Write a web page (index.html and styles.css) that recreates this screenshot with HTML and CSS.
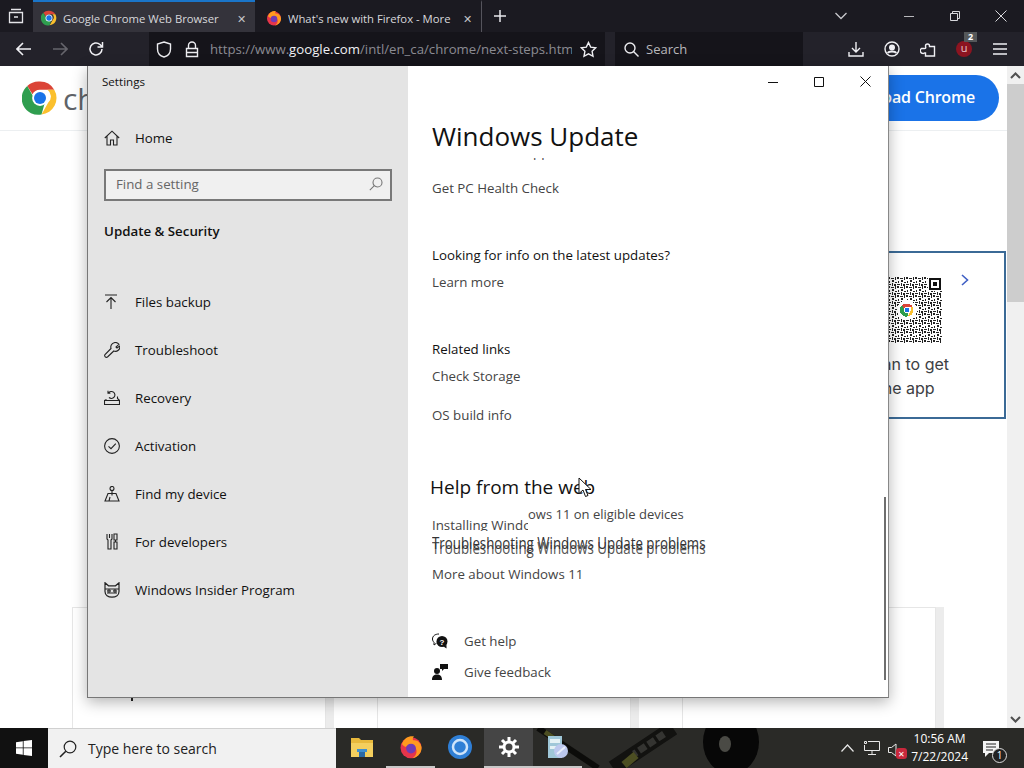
FILE: index.html
```html
<!DOCTYPE html>
<html lang="en">
<head>
  <meta charset="UTF-8" />
  <meta name="viewport" content="width=device-width, initial-scale=1.0"/>
  <title>Settings</title>
  <link rel="stylesheet" href="styles.css">
</head>
<body>

  <svg class="defs" width="0" height="0" aria-hidden="true">
    <symbol id="chrome" viewBox="0 0 48 48">
      <path d="M24 2a22 22 0 0 1 19 11H24a11 11 0 0 0-10 6L7 8a22 22 0 0 1 17-6z" fill="#db4437"/>
      <path d="M43 13a22 22 0 0 1-17 33l9-16a11 11 0 0 0-1-17z" fill="#fbc02d"/>
      <path d="M7 8l9.500 16.500a11 11 0 0 0 14 5.500L26 46A22 22 0 0 1 7 8z" fill="#2f9e4f"/>
      <circle cx="24" cy="24" r="10.500" fill="#fff"/>
      <circle cx="24" cy="24" r="8" fill="#1a73e8"/>
    </symbol>
    <symbol id="firefox" viewBox="0 0 32 32">
      <circle cx="16" cy="17" r="14" fill="#e6354b"/>
      <path d="M4 12C7 4 13 1 20 2c-2 2-2 4-1 5 5-1 10 3 11 9 1 7-5 14-12 15 6-4 7-11 3-15-3-3-9-3-12 0-2-1-4-2-5-4z" fill="#ff9a1f"/>
      <circle cx="16" cy="18" r="6.500" fill="#6f3bb5"/>
    </symbol>
  </svg>

  <div class="browser-tabs">
    <svg class="tab-list-icon" width="16" height="16" viewBox="0 0 16 16" fill="none" stroke="#e4e4e8" stroke-width="1.300">
      <path d="M3 1.500h10M1.500 4.500h13v10h-13zM6 9h4"/>
    </svg>
    <div class="tab tab-active">
      <svg class="tab-favicon" width="16" height="16"><use href="#chrome"/></svg>
      <span class="tab-title">Google Chrome Web Browser</span>
      <span class="tab-close">&#10005;</span>
    </div>
    <div class="tab">
      <svg class="tab-favicon" width="16" height="16"><use href="#firefox"/></svg>
      <span class="tab-title">What's new with Firefox - More</span>
      <span class="tab-close">&#10005;</span>
    </div>
    <svg class="tab-new" width="12" height="12" viewBox="0 0 12 12" stroke="#e8e8ec" stroke-width="1.500"><path d="M6 0v12M0 6h12"/></svg>
    <div class="window-controls">
      <svg width="12" height="8" viewBox="0 0 12 8" fill="none" stroke="#c8c8cc" stroke-width="1.300"><path d="M.5 1l5.500 5.500L11.500 1"/></svg>
      <svg class="win-min" width="10" height="10" viewBox="0 0 10 10" stroke="#b8b8bc"><path d="M0 5.500h10"/></svg>
      <svg class="win-restore" width="10" height="10" viewBox="0 0 10 10" fill="none" stroke="#d8d8dc"><path d="M.5 2.500h7v7h-7zM2.500 2.500v-2h7v7h-2"/></svg>
      <svg class="win-close" width="12" height="12" viewBox="0 0 12 12" stroke="#d8d8dc"><path d="M.5.500l11 11M11.500.500l-11 11"/></svg>
    </div>
  </div>

  <div class="browser-toolbar">
    <svg class="nav-back" width="16" height="14" viewBox="0 0 16 14" fill="none" stroke="#f0f0f4" stroke-width="1.600"><path d="M15 7H1.500M7 1L1 7l6 6"/></svg>
    <svg class="nav-forward" width="16" height="14" viewBox="0 0 16 14" fill="none" stroke="#66656c" stroke-width="1.600"><path d="M1 7h13.500M9 1l6 6-6 6"/></svg>
    <svg class="nav-reload" width="16" height="16" viewBox="0 0 16 16" fill="none" stroke="#f0f0f4" stroke-width="1.500"><path d="M14 8a6 6 0 1 1-2-4.500L14.500 6M14.500 1v5h-5"/></svg>
    <div class="url-bar">
      <svg width="16" height="17" viewBox="0 0 16 17" fill="none" stroke="#ececf0" stroke-width="1.400"><path d="M8 1l6.500 2v5c0 4-3 7-6.500 8C4.500 15 1.500 12 1.500 8V3z"/></svg>
      <svg class="url-lock" width="14" height="17" viewBox="0 0 14 17" fill="none" stroke="#ececf0" stroke-width="1.400"><path d="M1.500 7.500h11v8h-11zM3.500 7.500V4.500a3.500 3.500 0 0 1 7 0v3M1.500 11.500h11"/></svg>
      <span class="url-text">https://www.<b>google.com</b>/intl/en_ca/chrome/next-steps.htm</span>
      <svg class="url-star" width="17" height="17" viewBox="0 0 17 17" fill="none" stroke="#f0f0f4" stroke-width="1.400"><path d="M8.500 1.500l2.200 4.600 5 .7-3.600 3.500.9 5-4.500-2.400L4 15.300l.9-5L1.300 6.800l5-.7z"/></svg>
    </div>
    <div class="search-bar">
      <svg width="15" height="15" viewBox="0 0 15 15" fill="none" stroke="#ececf0" stroke-width="1.400"><circle cx="6" cy="6" r="5"/><path d="M9.500 9.500l5 5"/></svg>
      <span>Search</span>
    </div>
    <div class="toolbar-icons">
      <svg width="16" height="16" viewBox="0 0 16 16" fill="none" stroke="#f0f0f4" stroke-width="1.400"><path d="M8 1v9.500M4 7l4 4 4-4M1 11v4h14v-4"/></svg>
      <svg width="16" height="16" viewBox="0 0 16 16" fill="none" stroke="#f0f0f4" stroke-width="1.400"><circle cx="8" cy="8" r="7"/><circle cx="8" cy="6.500" r="2.300" fill="#f0f0f4"/><path d="M3.800 12c1-2 7.400-2 8.400 0" stroke-width="2"/></svg>
      <svg width="16" height="17" viewBox="0 0 16 17" fill="none" stroke="#f0f0f4" stroke-width="1.400"><path d="M1.500 8.500h3c2 0 1-1.500 1-2.500a2 2 0 0 1 4 0v.500h5v9.500h-9v-3h-1a2 2 0 0 1-3-4.500z" transform="translate(0 -1)"/></svg>
      <div class="ublock">
        <span class="ublock-mark">u</span>
        <span class="ublock-badge">2</span>
      </div>
      <svg width="16" height="12" viewBox="0 0 16 12" stroke="#f0f0f4" stroke-width="1.500"><path d="M1 1h14M1 6h14M1 11h14"/></svg>
    </div>
  </div>

  <div class="desktop">

    <div class="web-page">
      <div class="web-content">
        <header class="web-header">
          <svg width="36" height="36"><use href="#chrome"/></svg>
          <span class="web-brand">chrome</span>
          <button class="web-download">Download Chrome</button>
        </header>

        <div class="qr-card">
          <div class="qr-row">
            <svg class="qr-code" width="54" height="66" viewBox="0 0 54 66" shape-rendering="crispEdges">
              <defs>
                <pattern id="qrDots" width="9" height="9" patternUnits="userSpaceOnUse">
                  <path d="M0 0h2v2H0zM3 1h3v1H3zM7 0h1v3H7zM1 4h1v2H1zM4 3h2v2H4zM7 5h2v1H7zM0 7h3v1H0zM4 6h1v3H4zM6 7h2v2H6z" fill="#222"/>
                </pattern>
              </defs>
              <rect width="54" height="66" fill="url(#qrDots)"/>
              <rect x="40" y="0" width="14" height="14" fill="#fff"/>
              <rect x="41" y="1" width="12" height="12" fill="#111"/>
              <rect x="43" y="3" width="8" height="8" fill="#fff"/>
              <rect x="45" y="5" width="4" height="4" fill="#111"/>
              <circle cx="19" cy="33" r="10" fill="#fff"/>
              <use href="#chrome" x="12" y="26" width="14" height="14"/>
            </svg>
            <svg class="qr-arrow" width="8" height="12" viewBox="0 0 8 12" fill="none" stroke="#3f5fc4" stroke-width="1.600"><path d="M1 1l5.500 5L1 11"/></svg>
          </div>
          <p class="qr-text">Scan to get<br>the app</p>
        </div>

        <div class="web-cards">
          <div class="web-card"><span class="web-card-stub"></span></div>
          <div class="web-card"></div>
          <div class="web-card"></div>
        </div>
      </div>

      <div class="web-scrollbar">
        <svg width="11" height="7" viewBox="0 0 11 7" fill="none" stroke="#505050" stroke-width="2"><path d="M1 6l4.500-4.500L10 6"/></svg>
        <div class="web-scroll-thumb"></div>
        <svg width="11" height="7" viewBox="0 0 11 7" fill="none" stroke="#505050" stroke-width="2"><path d="M1 1l4.500 4.500L10 1"/></svg>
      </div>
    </div>

    <div class="settings-window">
      <aside class="settings-side">
        <div class="settings-title">Settings</div>

        <div class="side-row side-home">
          <svg class="side-icon" width="16" height="16" viewBox="0 0 16 16" fill="none" stroke="#222" stroke-width="1.100"><path d="M.8 8L8 1.200 15.200 8M3 6v9h3.500v-5h3v5H13V6"/></svg>
          <span>Home</span>
        </div>

        <div class="find-box">
          <span>Find a setting</span>
          <svg width="14" height="14" viewBox="0 0 14 14" fill="none" stroke="#777" stroke-width="1.100"><circle cx="8.500" cy="5.500" r="4.500"/><path d="M5.300 8.700L.8 13.200"/></svg>
        </div>

        <div class="side-heading">Update &amp; Security</div>

        <nav class="side-nav">
          <div class="side-row">
            <svg class="side-icon" width="16" height="16" viewBox="0 0 16 16" fill="none" stroke="#222" stroke-width="1.100"><path d="M1 1h12M7 15V3.500M2.500 8L7 3.500 11.500 8"/></svg>
            <span>Files backup</span>
          </div>
          <div class="side-row">
            <svg class="side-icon" width="16" height="16" viewBox="0 0 16 16" fill="none" stroke="#222" stroke-width="1.100"><path d="M10 .8a4.500 4.500 0 0 1 5 1.500l-3 2.700 1 1 2.800-2a4.500 4.500 0 0 1-6 5L3.500 15a1.800 1.800 0 0 1-2.500-2.500l6-6a4.500 4.500 0 0 1 3-5.700z"/></svg>
            <span>Troubleshoot</span>
          </div>
          <div class="side-row">
            <svg class="side-icon" width="16" height="16" viewBox="0 0 16 16" fill="none" stroke="#222" stroke-width="1.100"><path d="M.5 10.500h15v4H.5zM.5 10.500l2-1M15.500 10.500l-2-2V6.500M5 7.500a3.500 3.500 0 1 0-.5-4.500M4 .8V3.200h2.400"/></svg>
            <span>Recovery</span>
          </div>
          <div class="side-row">
            <svg class="side-icon" width="16" height="16" viewBox="0 0 16 16" fill="none" stroke="#222" stroke-width="1.100"><circle cx="8" cy="8" r="7.400"/><path d="M4.500 8.300l2.500 2.400 4.800-5"/></svg>
            <span>Activation</span>
          </div>
          <div class="side-row">
            <svg class="side-icon" width="16" height="16" viewBox="0 0 16 16" fill="none" stroke="#222" stroke-width="1.100"><circle cx="8" cy="2.500" r="2"/><path d="M8 4.500v5M4 7.500h8L15 15H1zM5 15l1-4"/></svg>
            <span>Find my device</span>
          </div>
          <div class="side-row">
            <svg class="side-icon" width="16" height="18" viewBox="0 0 16 18" fill="none" stroke="#222" stroke-width="1.100"><path d="M3 1v5l1 1v9h3V7l1-1V1M5.500 1v4M10 1h3v6h-3zM11.500 7v2M10 9h3v7h-3z"/></svg>
            <span>For developers</span>
          </div>
          <div class="side-row">
            <svg class="side-icon" width="16" height="16" viewBox="0 0 16 16" fill="none" stroke="#222" stroke-width="1.200"><path d="M1 .8l3.500 3h7L15 .8v8.700c0 3.500-3 5.700-7 5.700s-7-2.200-7-5.700zM1 7h14M3 11h10"/><circle cx="5" cy="9" r="1.200"/><circle cx="11" cy="9" r="1.200"/></svg>
            <span>Windows Insider Program</span>
          </div>
        </nav>
      </aside>

      <main class="settings-main">
        <div class="settings-caption">
          <svg width="10" height="10" viewBox="0 0 10 10" stroke="#111"><path d="M0 5.500h10"/></svg>
          <svg width="10" height="10" viewBox="0 0 10 10" fill="none" stroke="#111"><path d="M.5.500h9v9h-9z"/></svg>
          <svg width="11" height="11" viewBox="0 0 11 11" stroke="#111"><path d="M.5.500l10 10M10.500.500l-10 10"/></svg>
        </div>

        <h1 class="main-title">Windows Update</h1>

        <div class="clipped-line"><span>pp</span></div>
        <a class="main-link link-health">Get PC Health Check</a>

        <p class="main-label label-info">Looking for info on the latest updates?</p>
        <a class="main-link link-learn">Learn more</a>

        <p class="main-label label-related">Related links</p>
        <a class="main-link link-storage">Check Storage</a>
        <a class="main-link link-build">OS build info</a>

        <h2 class="main-subtitle">Help from the web</h2>
        <div class="torn-row">
          <a class="main-link torn-left">Installing Windows 11 on eligible devices</a>
          <a class="main-link torn-right">ows 11 on eligible devices</a>
        </div>
        <a class="main-link link-smeared">Troubleshooting Windows Update problems</a>
        <a class="main-link link-more">More about Windows 11</a>

        <div class="help-row help-first">
          <svg width="16" height="16" viewBox="0 0 16 16"><path d="M7 1C3 1 .5 3 .5 6c0 1.500.7 2.500 1.500 3.300V12l2.500-1.800" fill="none" stroke="#111"/><circle cx="10" cy="8.500" r="5.500" fill="#111"/><path d="M11.500 13.500l3 2v-3.500z" fill="#111"/><text x="10" y="11.500" font-size="8" font-weight="700" fill="#fff" text-anchor="middle" font-family="Liberation Sans, sans-serif">?</text></svg>
          <span>Get help</span>
        </div>
        <div class="help-row">
          <svg width="16" height="16" viewBox="0 0 16 16" fill="#111"><circle cx="5" cy="7" r="3"/><path d="M0 16c0-4 2-5.500 5-5.500s5 1.500 5 5.500zM8 0h8v5h-4l-2 2V5H8z"/></svg>
          <span>Give feedback</span>
        </div>

        <div class="main-scrollbar"></div>
      </main>
    </div>

    <svg class="mouse-cursor" width="14" height="21" viewBox="0 0 14 21"><path d="M1 1v15.500l4-3.500 2.500 6.500 2.500-1-2.500-6H13z" fill="#fff" stroke="#111"/></svg>
  </div>

  <footer class="taskbar">
    <svg class="task-wallpaper" width="1024" height="40" viewBox="0 0 1024 40" fill="none">
      <path d="M538 0l60 40" stroke="#0c0c0a" stroke-width="6"/>
      <path d="M545 4l16 11" stroke="#4c4e22" stroke-width="5"/>
      <path d="M673 0l-60 40" stroke="#121210" stroke-width="15"/>
      <path d="M664 6l-30 20" stroke="#343431" stroke-width="7" stroke-dasharray="8 3"/>
      <path d="M636 27l-12 10" stroke="#4c4e22" stroke-width="8"/>
      <ellipse cx="731" cy="14" rx="28" ry="32" fill="#070707"/>
      <ellipse cx="725" cy="16" rx="6" ry="8" fill="#4a4a45"/>
    </svg>
    <div class="start-button">
      <svg width="16" height="16" viewBox="0 0 16 16" fill="#fff"><path d="M0 2.200l6.800-1v6.300H0zM7.600 1l8.400-1v7.500H7.600zM0 8.300h6.800v6.500L0 13.800zM7.600 8.300H16V16l-8.400-1.100z"/></svg>
    </div>
    <div class="task-search">
      <svg width="18" height="18" viewBox="0 0 18 18" fill="none" stroke="#222" stroke-width="1.200"><circle cx="11" cy="7" r="5.800"/><path d="M6.800 11.200L1 17" stroke-width="1.600"/></svg>
      <span>Type here to search</span>
    </div>
    <div class="task-apps">
      <div class="task-app">
        <svg width="22" height="20" viewBox="0 0 22 20"><path d="M0 1h8l2 2h12v17H0z" fill="#e8b93c"/><path d="M0 6h22v14H0z" fill="#f4cf5e"/><path d="M6 12h10v3H6z" fill="#3f8fd0"/><path d="M8 15h6v5H8z" fill="#2b6aa5"/></svg>
      </div>
      <div class="task-app task-app-open">
        <svg width="24" height="26"><use href="#firefox"/></svg>
      </div>
      <div class="task-app">
        <svg width="24" height="24" viewBox="0 0 24 24" fill="none"><circle cx="12" cy="12" r="12" fill="#2f7fd6"/><circle cx="12" cy="12" r="7" stroke="#cfe4fa" stroke-width="2.500"/></svg>
      </div>
      <div class="task-app task-app-active">
        <svg width="20" height="20" viewBox="0 0 20 20" fill="none" stroke="#fff"><circle cx="10" cy="10" r="5" stroke-width="3"/><path d="M10 0v4M10 16v4M0 10h4M16 10h4M3 3l3 3M14 14l3 3M17 3l-3 3M6 14l-3 3" stroke-width="3"/></svg>
      </div>
      <div class="task-app task-app-open">
        <svg width="24" height="26" viewBox="0 0 24 26"><path d="M2 2h14v22H2z" fill="#9fc7d8"/><path d="M4 5h10v4H4zM4 12h8v3H4z" fill="#e4f1f5"/><circle cx="15" cy="17" r="7" fill="#bcc8ee"/><path d="M11 20l8-7" stroke="#e8eefc" stroke-width="2"/></svg>
      </div>
    </div>
    <div class="task-tray">
      <svg width="13" height="8" viewBox="0 0 13 8" fill="none" stroke="#e8e8e8" stroke-width="1.200"><path d="M.5 7.500l6-6.500 6 6.500"/></svg>
      <svg class="tray-network" width="16" height="14" viewBox="0 0 16 14" fill="none" stroke="#e8e8e8"><path d="M4 .5h11.500v9H.5V4M8 9.500v4M4 13.500h8M.5.500h2v2h-2z"/></svg>
      <div class="tray-sound">
        <svg width="10" height="14" viewBox="0 0 10 14" fill="none" stroke="#e8e8e8"><path d="M.5 4.500h3L8 1v12L3.500 9.500h-3z"/></svg>
        <span class="tray-muted">&#10005;</span>
      </div>
      <div class="tray-clock">
        <span>10:56 AM</span>
        <span>7/22/2024</span>
      </div>
      <div class="tray-notes">
        <svg width="17" height="16" viewBox="0 0 17 16" fill="#f4f4f4"><path d="M0 0h16v12H6l-4 4v-4H0z"/><path d="M3 3h10M3 6h10M3 9h7" stroke="#222"/></svg>
        <span class="tray-count">1</span>
      </div>
    </div>
  </footer>

</body>
</html>
```

FILE: styles.css
```css
* {
  box-sizing: border-box;
}

html, body {
  height: 100%;
}

body {
  margin: 0;
  width: 1024px;
  height: 768px;
  overflow: hidden;
  display: flex;
  flex-direction: column;
  font-family: "Open Sans", "Noto Sans", sans-serif;
  background: #fff;
}

.defs {
  position: absolute;
}

/* browser tabs */
.browser-tabs {
  flex: 0 0 32px;
  display: flex;
  align-items: stretch;
  background: #1b1a21;
  color: #e4e4e8;
  font-size: 11.300px;
}

.tab-list-icon {
  margin: 8px 9px 0 8px;
}

.tab {
  width: 224px;
  display: flex;
  align-items: center;
  padding: 2px 9px 0 8px;
  margin-right: 1px;
  border-top: 2px solid transparent;
}

.tab + .tab {
  border-right: 1px solid #55545c;
  margin-left: 2px;
}

.tab-active {
  width: 222px;
  background: #34333b;
  border-top-color: #1a75c9;
}

.tab-favicon {
  flex: none;
  margin-right: 6px;
}

.tab-title {
  flex: 1;
  overflow: hidden;
  white-space: nowrap;
  color: #d8d8dc;
}

.tab-close {
  margin-left: 7px;
  font-size: 11px;
  color: #c4c4c8;
}

.tab-new {
  margin: 10px 0 0 11px;
}

.window-controls {
  margin-left: auto;
  display: flex;
  align-items: center;
  padding-right: 17px;
}

.win-min {
  margin-left: 57px;
}

.win-restore {
  margin-left: 36px;
}

.win-close {
  margin-left: 35px;
}

/* browser toolbar */
.browser-toolbar {
  flex: 0 0 34px;
  display: flex;
  align-items: center;
  background: #23222a;
  padding-left: 16px;
  color: #f0f0f4;
}

.nav-forward {
  margin-left: 20px;
}

.nav-reload {
  margin-left: 20px;
}

.url-bar {
  width: 456px;
  height: 34px;
  margin-left: 45px;
  display: flex;
  align-items: center;
  padding-left: 7px;
  background: #15141a;
  font-size: 13.200px;
}

.url-lock {
  margin-left: 13px;
}

.url-text {
  width: 362px;
  margin: 0 8px 0 11px;
  overflow: hidden;
  white-space: nowrap;
  color: #8b8b92;
}

.url-text b {
  font-weight: 400;
  color: #f0f0f4;
}

.search-bar {
  width: 188px;
  height: 34px;
  margin-left: 10px;
  display: flex;
  align-items: center;
  gap: 7px;
  padding-left: 9px;
  background: #15141a;
  color: #b8b8bc;
  font-size: 13px;
}

.toolbar-icons {
  margin-left: 45px;
  display: flex;
  align-items: center;
  gap: 20px;
}

.ublock {
  position: relative;
  width: 16px;
  height: 16px;
  border-radius: 50%;
  background: #8c1420;
}

.ublock-mark {
  display: block;
  text-align: center;
  font-size: 11px;
  line-height: 14px;
  color: #e8c4c8;
}

.ublock-badge {
  position: absolute;
  top: -9px;
  right: -5px;
  width: 13px;
  height: 10px;
  background: #55585a;
  color: #fff;
  font-size: 9px;
  font-weight: 700;
  line-height: 10px;
  text-align: center;
}

/* desktop area with the page behind and the settings window on top */
.desktop {
  position: relative;
  flex: 1;
  min-height: 0;
}

.web-page {
  height: 100%;
  display: flex;
}

.web-content {
  flex: 1;
  overflow: hidden;
  background: #fff;
}

.web-header {
  height: 65px;
  display: flex;
  align-items: center;
  padding: 0 8px 0 22px;
  border-bottom: 1px solid #eceff1;
}

.web-brand {
  margin-left: 5px;
  font-family: "Open Sans", sans-serif;
  font-size: 30px;
  color: #5f6368;
}

.web-download {
  margin-left: auto;
  height: 46px;
  padding: 0 24px 2px;
  border: none;
  border-radius: 23px;
  background: #1a73e8;
  color: #fff;
  font-family: "Open Sans", sans-serif;
  font-size: 16px;
  font-weight: 600;
  letter-spacing: -0.2px;
}

.qr-card {
  width: 200px;
  height: 168px;
  margin: 120px 1px 0 auto;
  padding: 24px 0 0 80px;
  border: 2px solid #3b6a96;
  background: #fff;
}

.qr-row {
  display: flex;
  align-items: flex-start;
}

.qr-arrow {
  margin-left: 19px;
  margin-top: -3px;
}

.qr-text {
  width: 100px;
  margin: 9px 0 0 -32px;
  white-space: nowrap;
  text-align: center;
  font-family: "Inter", sans-serif;
  font-size: 16px;
  line-height: 24px;
  color: #3c4043;
}

.web-cards {
  display: flex;
  gap: 51px;
  margin: 188px 0 0 72px;
}

.web-card {
  flex: 0 0 254px;
  height: 200px;
  padding: 85px 0 0 58px;
  border: 1px solid #e6e6e6;
  box-shadow: 8px 0 0 #ececec;
}

.web-card-stub {
  display: block;
  width: 2px;
  height: 8px;
  background: #222;
}

.web-scrollbar {
  flex: 0 0 17px;
  display: flex;
  flex-direction: column;
  align-items: center;
  padding: 6px 0 5px;
  background: #f0f0f0;
}

.web-scroll-thumb {
  width: 100%;
  height: 218px;
  margin: 5px 0 auto;
  background: #cdcdcd;
}

/* settings window */
.settings-window {
  position: absolute;
  left: 87px;
  top: 0;
  width: 802px;
  height: 632px;
  display: flex;
  background: #fff;
  border-left: 1px solid #777;
  border-bottom: 1px solid #777;
  border-right: 1px solid #888;
  box-shadow: 0 4px 14px rgba(0,0,0,0.3);
}

.settings-side {
  flex: 0 0 320px;
  padding: 0 16px;
  background: #e4e4e4;
  color: #111;
  font-size: 13.300px;
}

.settings-title {
  padding: 8px 0 0 0;
  margin-left: -2px;
  height: 32px;
  font-size: 11.600px;
  line-height: 16px;
}

.side-row {
  height: 48px;
  display: flex;
  align-items: center;
  gap: 15px;
}

.side-home {
  margin-top: 16px;
}

.side-icon {
  flex: none;
}

.find-box {
  height: 32px;
  margin-top: 7px;
  display: flex;
  align-items: center;
  justify-content: space-between;
  padding: 0 7px 2px 10px;
  border: 2px solid #787878;
  background: #f0f0f0;
  color: #666;
}

.side-heading {
  margin-top: 20px;
  font-weight: 600;
  line-height: 20px;
}

.side-nav {
  margin-top: 37px;
}

.settings-main {
  position: relative;
  flex: 1;
  padding-left: 24px;
  color: #444;
  font-size: 13.300px;
}

.settings-caption {
  position: absolute;
  top: 10px;
  right: 17px;
  display: flex;
  align-items: center;
  gap: 36px;
}

.main-title {
  margin: 0;
  padding-top: 50px;
  font-size: 26px;
  font-weight: 400;
  line-height: 40px;
  color: #111;
}

.clipped-line {
  height: 3px;
  padding-left: 101px;
  margin-top: 2px;
  overflow: hidden;
}

.clipped-line span {
  display: block;
  margin-top: -14px;
  line-height: 16px;
}

.main-link {
  display: block;
  line-height: 20px;
}

.main-label {
  margin: 0;
  line-height: 20px;
  color: #111;
}

.link-health {
  margin-top: 17px;
}

.label-info {
  margin-top: 47px;
}

.link-learn {
  margin-top: 7px;
}

.label-related {
  margin-top: 47px;
}

.link-storage {
  margin-top: 7px;
}

.link-build {
  margin-top: 19px;
}

.main-subtitle {
  margin: 48px 0 0 -2px;
  font-size: 19px;
  font-weight: 400;
  line-height: 28px;
  color: #111;
}

.torn-row {
  display: flex;
  align-items: flex-start;
  height: 27px;
  margin-top: 3px;
}

.torn-left {
  flex: 0 0 96px;
  height: 16px;
  margin-top: 11px;
  overflow: hidden;
  white-space: nowrap;
}

.torn-right {
  font-size: 13px;
  white-space: nowrap;
}

.link-smeared {
  display: inline-block;
  white-space: nowrap;
  text-shadow: 0 4px 0 #555;
  transform: scaleY(1.2);
  transform-origin: left top;
  color: #333;
}

.link-more {
  margin-top: 13px;
}

.help-row {
  height: 31px;
  display: flex;
  align-items: center;
  gap: 16px;
}

.help-first {
  margin-top: 41px;
}

.main-scrollbar {
  position: absolute;
  right: 2px;
  top: 431px;
  width: 2px;
  height: 183px;
  background: #6e6e6e;
}

.mouse-cursor {
  position: absolute;
  left: 578px;
  top: 411px;
}

/* taskbar */
.taskbar {
  position: relative;
  z-index: 0;
  flex: 0 0 40px;
  display: flex;
  color: #fff;
  background: #2a2a27;
}

.task-wallpaper {
  position: absolute;
  left: 0;
  top: 0;
  z-index: -1;
}

.start-button {
  flex: 0 0 48px;
  display: flex;
  align-items: center;
  justify-content: center;
  background: #111;
}

.task-search {
  flex: 0 0 288px;
  display: flex;
  align-items: center;
  gap: 11px;
  padding-left: 11px;
  background: #f1f1f1;
  border-top: 1px solid #d0d0d0;
  color: #222;
  font-size: 14px;
}

.task-apps {
  display: flex;
  padding-left: 1px;
}

.task-app {
  width: 49px;
  display: flex;
  align-items: center;
  justify-content: center;
  border-bottom: 2px solid transparent;
}

.task-app-open {
  border-bottom-color: #c8c8c8;
}

.task-app-active {
  background: #454545;
  border-bottom-color: #c8c8c8;
}

.task-tray {
  margin-left: auto;
  display: flex;
  align-items: center;
  padding-right: 24px;
}

.tray-network {
  margin-left: 10px;
}

.tray-sound {
  position: relative;
  margin-left: 8px;
  width: 14px;
  height: 16px;
}

.tray-muted {
  position: absolute;
  right: -5px;
  bottom: -3px;
  width: 11px;
  height: 11px;
  border-radius: 3px;
  background: #c8283c;
  font-size: 8px;
  line-height: 11px;
  text-align: center;
}

.tray-clock {
  margin-left: 9px;
  display: flex;
  flex-direction: column;
  align-items: center;
  gap: 2px;
  font-size: 12px;
  line-height: 16px;
}

.tray-notes {
  position: relative;
  margin-left: 15px;
  width: 17px;
  height: 16px;
}

.tray-count {
  position: absolute;
  right: -7px;
  bottom: -7px;
  width: 15px;
  height: 15px;
  border: 1px solid #ddd;
  border-radius: 50%;
  background: #222;
  font-size: 10px;
  line-height: 13px;
  text-align: center;
}
```
